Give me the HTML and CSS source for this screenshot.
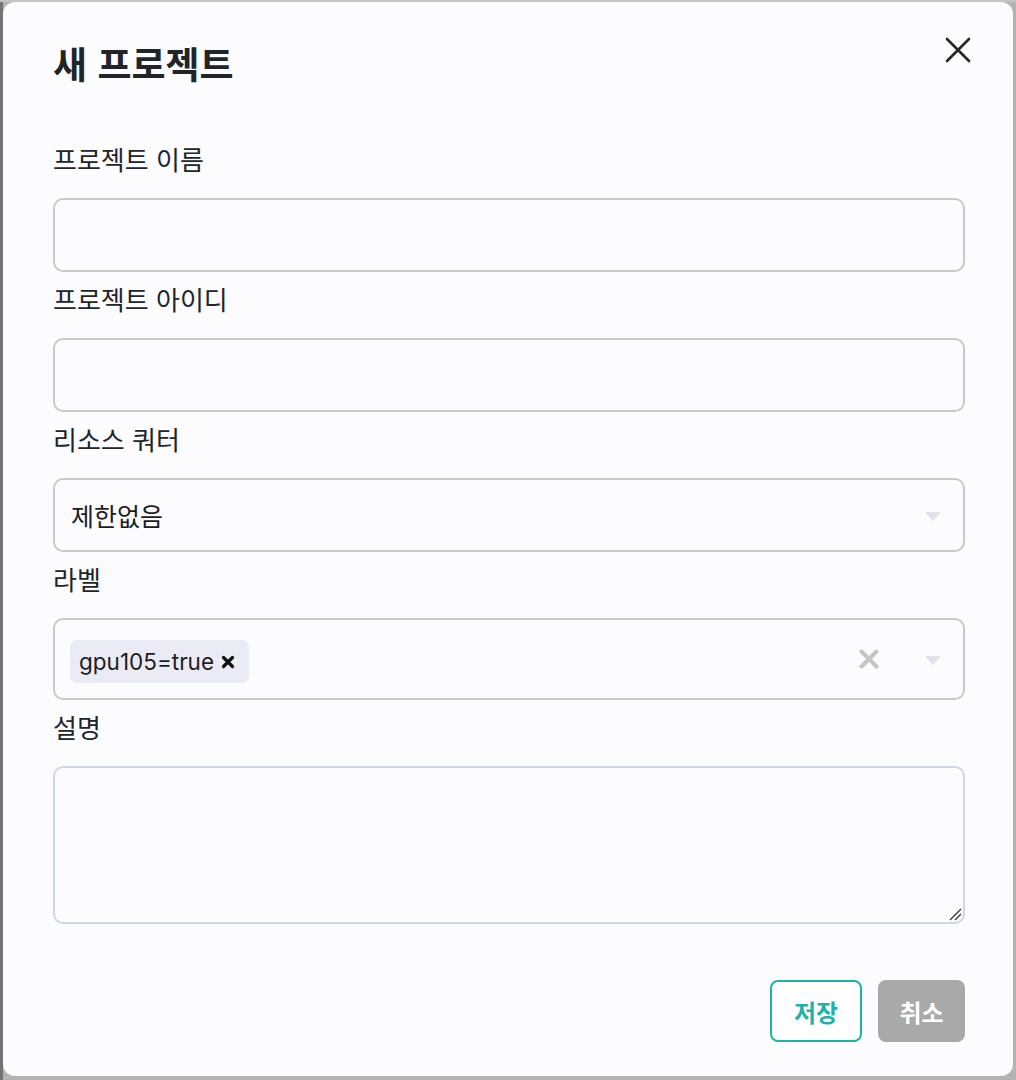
FILE: index.html
```html
<!DOCTYPE html>
<html lang="ko">
<head>
<meta charset="utf-8">
<title>새 프로젝트</title>
<link rel="stylesheet" href="styles.css">
</head>
<body>
<div class="dialog">
  <div class="header">
    <h1 class="title">새 프로젝트</h1>
    <button class="close" aria-label="닫기">
      <svg width="26" height="26" viewBox="0 0 26 26"><path d="M2 2 L24 24 M24 2 L2 24" stroke="#23272b" stroke-width="2.6" stroke-linecap="round" fill="none"/></svg>
    </button>
  </div>
  <div class="form">
    <div class="field">
      <label class="label">프로젝트 이름</label>
      <div class="input"></div>
    </div>
    <div class="field">
      <label class="label">프로젝트 아이디</label>
      <div class="input"></div>
    </div>
    <div class="field">
      <label class="label">리소스 쿼터</label>
      <div class="input select">
        <span class="value">제한없음</span>
        <span class="arrow"></span>
      </div>
    </div>
    <div class="field">
      <label class="label">라벨</label>
      <div class="input select multi">
        <span class="chip">gpu105=true
          <svg width="14" height="14" viewBox="0 0 14 14"><path d="M2.5 2.5 L11.5 11.5 M11.5 2.5 L2.5 11.5" stroke="#111" stroke-width="3.2" stroke-linecap="round"/></svg>
        </span>
        <span class="spacer"></span>
        <svg class="clear" width="20" height="20" viewBox="0 0 20 20"><path d="M2.5 2.5 L17.5 17.5 M17.5 2.5 L2.5 17.5" stroke="#c4c4c4" stroke-width="4" stroke-linecap="round"/></svg>
        <span class="arrow"></span>
      </div>
    </div>
    <div class="field">
      <label class="label">설명</label>
      <div class="textarea">
        <svg class="grip" width="14" height="14" viewBox="0 0 14 14"><path d="M13 2 L2 13 M13 7 L7 13" stroke="#333" stroke-width="1.3"/></svg>
      </div>
    </div>
  </div>
  <div class="actions">
    <button class="btn save">저장</button>
    <button class="btn cancel">취소</button>
  </div>
</div>
</body>
</html>
```
FILE: styles.css
```css
html, body {
  margin: 0;
  padding: 0;
}
body {
  background: linear-gradient(#c4c4c4 0 2px, transparent 2px),
              linear-gradient(90deg, #747474 0 3px, #b3b3b3 3px);
  background-color: #767676;
  padding: 2px 3px 4px 3px;
  font-family: "Noto Sans CJK KR", "Noto Sans", sans-serif;
  color: #212529;
}
.dialog {
  box-sizing: border-box;
  height: 1074px;
  background: #fcfcfe;
  border-radius: 12px;
  padding: 37px 48px 0 50px;
  display: flex;
  flex-direction: column;
}
.header {
  display: flex;
  justify-content: space-between;
  align-items: flex-start;
}
.title {
  margin: 0;
  font-size: 37px;
  line-height: 48px;
  font-weight: 700;
  color: #212529;
}
.close {
  background: none;
  border: 0;
  padding: 0;
  margin-top: -2px;
  margin-right: -6px;
  width: 26px;
  height: 26px;
  cursor: pointer;
}
.close svg { display: block; }
.form {
  margin-top: 54px;
  display: flex;
  flex-direction: column;
}
.field {
  display: flex;
  flex-direction: column;
  margin-bottom: 9px;
}
.label {
  font-size: 26px;
  line-height: 36px;
  color: #212529;
  margin-bottom: 21px;
}
.input {
  box-sizing: border-box;
  height: 74px;
  border: 2px solid #c9c9cb;
  border-radius: 10px;
  background: #fcfcfe;
  display: flex;
  align-items: center;
  padding: 0 20px 0 16px;
}
.select .value {
  flex: 1;
  font-size: 25px;
  color: #1d1d1f;
  padding-left: 0;
}
.arrow {
  width: 0;
  height: 0;
  border-left: 8px solid transparent;
  border-right: 8px solid transparent;
  border-top: 9px solid #e2e2ee;
  margin-right: 2px;
  margin-top: 2px;
}
.multi {
  height: 82px;
  padding-left: 15px;
}
.chip {
  display: inline-flex;
  align-items: center;
  gap: 7px;
  height: 43px;
  box-sizing: border-box;
  padding: 0 14px 0 9px;
  margin-top: 5px;
  background: #ebebf5;
  border-radius: 7px;
  font-family: Inter, "Noto Sans", sans-serif;
  font-size: 22.5px;
  color: #1d1d1f;
}
.chip svg { display: block; margin-top: 1px; }
.spacer { flex: 1; }
.clear { margin-right: 46px; margin-top: -1px; }
.textarea {
  box-sizing: border-box;
  height: 158px;
  border: 2px solid #cdd8e3;
  border-radius: 10px;
  background: #fcfcfe;
  position: relative;
}
.grip {
  position: absolute;
  right: 1px;
  bottom: 1px;
}
.actions {
  margin-top: 47px;
  display: flex;
  justify-content: flex-end;
  gap: 16px;
}
.btn {
  box-sizing: border-box;
  height: 62px;
  border-radius: 8px;
  font-family: "Noto Sans CJK KR", sans-serif;
  font-size: 24px;
  font-weight: 700;
  cursor: pointer;
}
.save {
  width: 92px;
  background: #fff;
  border: 2px solid #1eb3a6;
  color: #1eb3a6;
}
.cancel {
  width: 87px;
  background: #a9a9a9;
  border: 0;
  color: #fff;
}
```
